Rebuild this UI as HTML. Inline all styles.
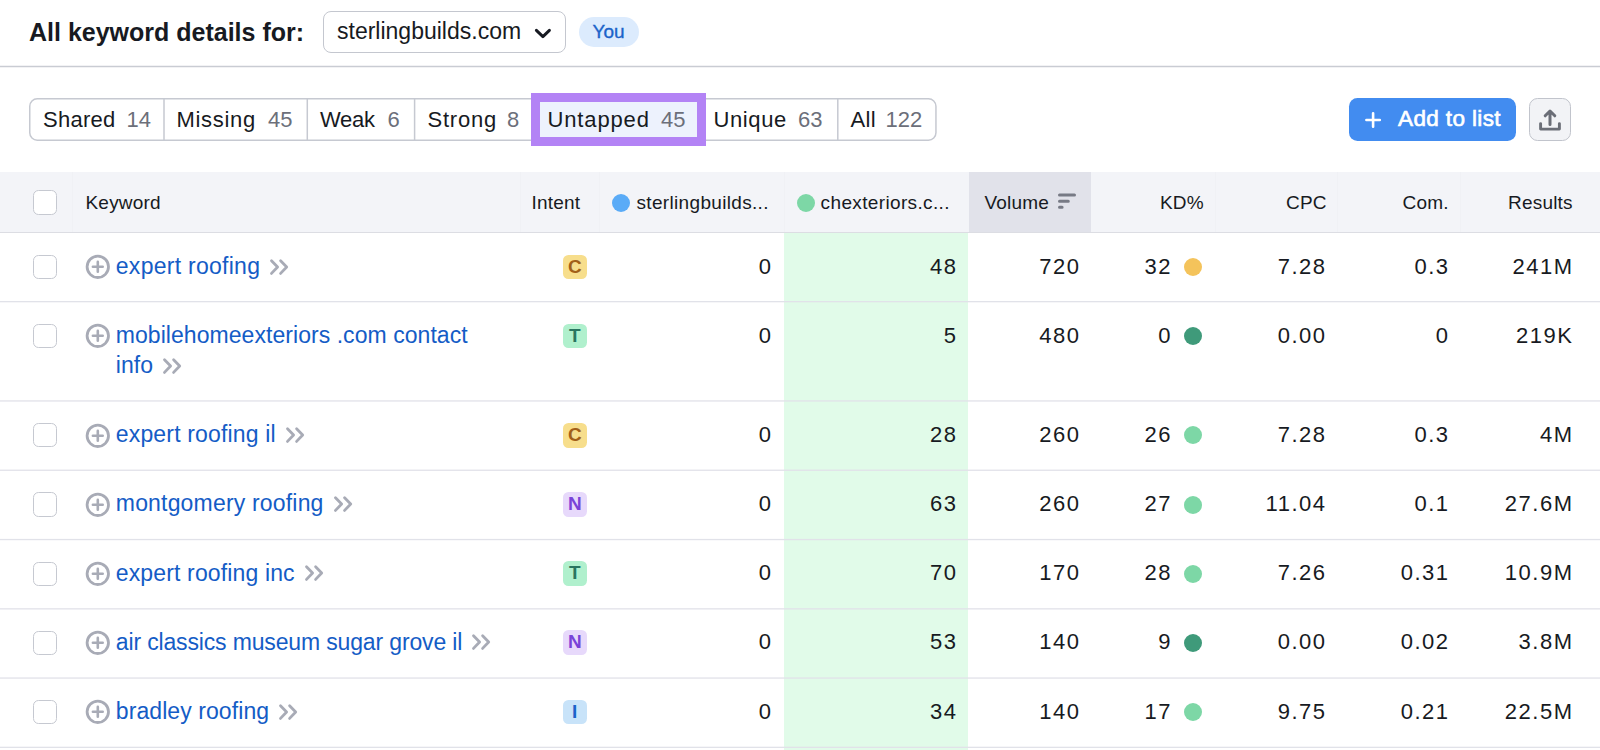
<!DOCTYPE html>
<html><head><meta charset="utf-8">
<style>
*{box-sizing:border-box;margin:0;padding:0}
html,body{width:1600px;height:750px;overflow:hidden;background:#fff}
body{position:relative;font-family:"Liberation Sans",sans-serif;color:#171a22}
.a{position:absolute;white-space:nowrap;line-height:1}
.title{left:29px;top:19.8px;font-size:25px;font-weight:700}
.dd{left:323.2px;top:10.6px;width:242.4px;height:42.6px;border:1.6px solid #c4c7cf;border-radius:8px}
.ddt{left:337px;top:20.3px;font-size:23px}
.you{left:578.8px;top:16.6px;width:60.6px;height:30.6px;border-radius:16px;background:#dcebfd}
.yout{left:592.5px;top:21.8px;font-size:19px;color:#1b63c9;-webkit-text-stroke:0.35px #1b63c9}
.sep{left:0;top:66px;width:1600px;height:1.2px;background:#d3d5dc}
.tabs{left:29px;top:98.5px;width:908px;height:42.2px;border:1.3px solid #c4c7cf;border-radius:8px}
.tsep{top:98.5px;width:1.3px;height:42.2px;background:#c4c7cf}
.tl{top:109px;font-size:22px}
.tc{color:#6c6f7a}
.untap{left:530.8px;top:92.7px;width:174.8px;height:53.5px;border:9px solid #b383f5;background:#edf2fd}
.btn{left:1348.5px;top:98px;width:167.5px;height:43px;border-radius:8.5px;background:#428cf0}
.btnt{left:1398px;top:108.2px;font-size:22.5px;font-weight:400;letter-spacing:0.38px;color:#fff;-webkit-text-stroke:0.65px #fff}
.exp{left:1528.6px;top:98.3px;width:42.4px;height:42.7px;border:1.5px solid #c1c4cc;border-radius:8.5px;background:#f2f3f6}
.thead{left:0;top:172px;width:1600px;height:60.5px;background:#f3f4f8;border-bottom:1.2px solid #dcdde3}
.volh{left:968.6px;top:172px;width:122.8px;height:60px;background:#e1e2ea}
.hsep{top:172px;width:1px;height:60px;background:#f0f1f5}
.cb{width:24.4px;height:24.4px;border:1.6px solid #c6c9d1;border-radius:5.5px;background:#fff}
.ht{top:192.5px;font-size:19px;letter-spacing:0.2px}
.green{left:784px;top:233px;width:184.4px;height:517px;background:#e1fbe9}
.rline{left:0;width:1600px;height:1.2px;background:#e2e3ea}
.kw{font-size:23px;color:#145cc6}
.num{font-size:22px;letter-spacing:1.5px}
.badge{width:24.5px;height:24.5px;border-radius:5.5px;font-size:19px;font-weight:700;text-align:center;line-height:24.5px}
.chev{vertical-align:-2.7px;margin-left:9.2px}
.dot{width:18px;height:18px;border-radius:50%}
</style></head><body>
<div class="a title">All keyword details for:</div>
<div class="a dd"></div>
<div class="a ddt">sterlingbuilds.com</div>
<svg class="a" style="left:533px;top:26px" width="20" height="14" viewBox="0 0 20 14"><path d="M3.4 4.4 L9.9 10.6 L16.4 4.4" fill="none" stroke="#171a22" stroke-width="3" stroke-linecap="round" stroke-linejoin="round"/></svg>
<div class="a you"></div>
<div class="a yout">You</div>
<svg class="a" style="left:0;top:0" width="1600" height="80"><rect x="0" y="65.75" width="1600" height="1.5" fill="#c9ccd3"/></svg>

<svg class="a" style="left:0;top:0" width="1000" height="160"><rect x="29.75" y="98.85" width="906.2" height="41.3" rx="7.5" fill="none" stroke="#c6c9d1" stroke-width="1.5"/><path d="M164 98.85V140.15M307.3 98.85V140.15M414.6 98.85V140.15M837.8 98.85V140.15" stroke="#c6c9d1" stroke-width="1.5"/></svg>
<div class="a untap"></div>
<div class="a tl" style="left:43px;letter-spacing:0.27px">Shared</div><div class="a tl tc" style="left:126.5px">14</div>
<div class="a tl" style="left:176.5px;letter-spacing:0.7px">Missing</div><div class="a tl tc" style="left:268px">45</div>
<div class="a tl" style="left:320px;letter-spacing:-0.3px">Weak</div><div class="a tl tc" style="left:387.5px">6</div>
<div class="a tl" style="left:427.5px;letter-spacing:0.78px">Strong</div><div class="a tl tc" style="left:507px">8</div>
<div class="a tl" style="left:547.5px;letter-spacing:0.86px">Untapped</div><div class="a tl tc" style="left:661px">45</div>
<div class="a tl" style="left:713.5px;letter-spacing:0.6px">Unique</div><div class="a tl tc" style="left:798px">63</div>
<div class="a tl" style="left:850.5px;letter-spacing:0.3px">All</div><div class="a tl tc" style="left:885.5px">122</div>

<div class="a btn"></div>
<svg class="a" style="left:1362px;top:108.5px" width="22" height="22" viewBox="0 0 22 22"><path d="M11.1 4.3V17.7M4.4 11H17.8" stroke="#fff" stroke-width="2.6" stroke-linecap="round"/></svg>
<div class="a btnt">Add to list</div>
<div class="a exp"></div>
<svg class="a" style="left:1536px;top:106px" width="28" height="28" viewBox="0 0 28 28"><path d="M14 5.5V18.6M9.2 9.8L14 5L18.8 9.8" fill="none" stroke="#6b6e77" stroke-width="3" stroke-linecap="round" stroke-linejoin="round"/><path d="M4.6 17.6V23.1H23.4V17.6" fill="none" stroke="#6b6e77" stroke-width="2.9" stroke-linecap="round" stroke-linejoin="round"/></svg>

<div class="a thead"></div>
<div class="a volh"></div>
<div class="a hsep" style="left:72px"></div>
<div class="a hsep" style="left:519.5px"></div>
<div class="a hsep" style="left:599px"></div>
<div class="a hsep" style="left:783.5px"></div>
<div class="a hsep" style="left:1337px"></div>
<div class="a hsep" style="left:1460px"></div>
<div class="a hsep" style="left:1215px"></div>
<div class="a cb" style="left:32.8px;top:190.3px"></div>
<div class="a ht" style="left:85.5px">Keyword</div>
<div class="a ht" style="left:531.5px">Intent</div>
<div class="a dot" style="left:612px;top:193.5px;background:#5aabf7"></div>
<div class="a ht" style="left:636.5px;letter-spacing:0.33px">sterlingbuilds...</div>
<div class="a dot" style="left:796.5px;top:193.5px;background:#7dd7a6"></div>
<div class="a ht" style="left:820.6px;letter-spacing:0.36px">chexteriors.c...</div>
<div class="a ht" style="left:984.5px">Volume</div>
<svg class="a" style="left:1056px;top:192px" width="22" height="18" viewBox="0 0 22 18"><path d="M3.5 3H18.5M3.5 9.2H12.3M3.5 15.2H6.1" stroke="#777a85" stroke-width="3" stroke-linecap="round"/></svg>
<div class="a ht" style="left:1160px">KD%</div>
<div class="a ht" style="left:1286px">CPC</div>
<div class="a ht" style="left:1402.5px">Com.</div>
<div class="a ht" style="left:1508px">Results</div>

<div class="a green"></div>
<div class="a cb" style="left:32.8px;top:254.80px"></div>
<svg class="a" style="left:84px;top:253.20px" width="28" height="28" viewBox="0 0 28 28"><circle cx="13.8" cy="13.8" r="10.7" fill="none" stroke="#a8abb6" stroke-width="2.8"/><path d="M13.8 8.9V18.7M8.9 13.8H18.7" stroke="#a8abb6" stroke-width="2.6" stroke-linecap="round"/></svg>
<div class="a kw" style="left:115.8px;letter-spacing:0.27px;top:254.82px"><span class="kwt">expert roofing</span><svg class="chev" width="24" height="20" viewBox="0 0 24 20"><path d="M2.5 3.8L8.6 10L2.5 16.4M11.6 3.8L17.7 10L11.6 16.4" fill="none" stroke="#a8abb6" stroke-width="2.8" stroke-linecap="round" stroke-linejoin="round"/></svg></div>
<div class="a badge" style="left:562.5px;top:254.75px;background:#f7de8c;color:#a15f18">C</div>
<div class="a num" style="right:827.5px;top:255.67px">0</div>
<div class="a num" style="right:642.5px;top:255.67px">48</div>
<div class="a num" style="right:519.5px;top:255.67px">720</div>
<div class="a num" style="right:428.0px;top:255.67px">32</div>
<div class="a num" style="right:273.5px;top:255.67px">7.28</div>
<div class="a num" style="right:150.5px;top:255.67px">0.3</div>
<div class="a num" style="right:26.5px;top:255.67px">241M</div>
<div class="a dot" style="left:1184.2px;top:258.00px;background:#f4c35b"></div>
<div class="a cb" style="left:32.8px;top:323.90px"></div>
<svg class="a" style="left:84px;top:322.30px" width="28" height="28" viewBox="0 0 28 28"><circle cx="13.8" cy="13.8" r="10.7" fill="none" stroke="#a8abb6" stroke-width="2.8"/><path d="M13.8 8.9V18.7M8.9 13.8H18.7" stroke="#a8abb6" stroke-width="2.6" stroke-linecap="round"/></svg>
<div class="a kw" style="left:115.8px;letter-spacing:0.05px;top:323.92px">mobilehomeexteriors .com contact</div>
<div class="a kw" style="left:115.8px;letter-spacing:0.05px;top:354.12px"><span class="kwt">info</span><svg class="chev" width="24" height="20" viewBox="0 0 24 20"><path d="M2.5 3.8L8.6 10L2.5 16.4M11.6 3.8L17.7 10L11.6 16.4" fill="none" stroke="#a8abb6" stroke-width="2.8" stroke-linecap="round" stroke-linejoin="round"/></svg></div>
<div class="a badge" style="left:562.5px;top:323.85px;background:#b0f0cd;color:#2a7560">T</div>
<div class="a num" style="right:827.5px;top:324.77px">0</div>
<div class="a num" style="right:642.5px;top:324.77px">5</div>
<div class="a num" style="right:519.5px;top:324.77px">480</div>
<div class="a num" style="right:428.0px;top:324.77px">0</div>
<div class="a num" style="right:273.5px;top:324.77px">0.00</div>
<div class="a num" style="right:150.5px;top:324.77px">0</div>
<div class="a num" style="right:26.5px;top:324.77px">219K</div>
<div class="a dot" style="left:1184.2px;top:327.10px;background:#3f9a7a"></div>
<div class="a cb" style="left:32.8px;top:423.10px"></div>
<svg class="a" style="left:84px;top:421.50px" width="28" height="28" viewBox="0 0 28 28"><circle cx="13.8" cy="13.8" r="10.7" fill="none" stroke="#a8abb6" stroke-width="2.8"/><path d="M13.8 8.9V18.7M8.9 13.8H18.7" stroke="#a8abb6" stroke-width="2.6" stroke-linecap="round"/></svg>
<div class="a kw" style="left:115.8px;letter-spacing:0.16px;top:423.12px"><span class="kwt">expert roofing il</span><svg class="chev" width="24" height="20" viewBox="0 0 24 20"><path d="M2.5 3.8L8.6 10L2.5 16.4M11.6 3.8L17.7 10L11.6 16.4" fill="none" stroke="#a8abb6" stroke-width="2.8" stroke-linecap="round" stroke-linejoin="round"/></svg></div>
<div class="a badge" style="left:562.5px;top:423.05px;background:#f7de8c;color:#a15f18">C</div>
<div class="a num" style="right:827.5px;top:423.97px">0</div>
<div class="a num" style="right:642.5px;top:423.97px">28</div>
<div class="a num" style="right:519.5px;top:423.97px">260</div>
<div class="a num" style="right:428.0px;top:423.97px">26</div>
<div class="a num" style="right:273.5px;top:423.97px">7.28</div>
<div class="a num" style="right:150.5px;top:423.97px">0.3</div>
<div class="a num" style="right:26.5px;top:423.97px">4M</div>
<div class="a dot" style="left:1184.2px;top:426.30px;background:#7dd7a6"></div>
<div class="a cb" style="left:32.8px;top:492.30px"></div>
<svg class="a" style="left:84px;top:490.70px" width="28" height="28" viewBox="0 0 28 28"><circle cx="13.8" cy="13.8" r="10.7" fill="none" stroke="#a8abb6" stroke-width="2.8"/><path d="M13.8 8.9V18.7M8.9 13.8H18.7" stroke="#a8abb6" stroke-width="2.6" stroke-linecap="round"/></svg>
<div class="a kw" style="left:115.8px;letter-spacing:0.18px;top:492.32px"><span class="kwt">montgomery roofing</span><svg class="chev" width="24" height="20" viewBox="0 0 24 20"><path d="M2.5 3.8L8.6 10L2.5 16.4M11.6 3.8L17.7 10L11.6 16.4" fill="none" stroke="#a8abb6" stroke-width="2.8" stroke-linecap="round" stroke-linejoin="round"/></svg></div>
<div class="a badge" style="left:562.5px;top:492.25px;background:#e7d9fb;color:#7a44d8">N</div>
<div class="a num" style="right:827.5px;top:493.17px">0</div>
<div class="a num" style="right:642.5px;top:493.17px">63</div>
<div class="a num" style="right:519.5px;top:493.17px">260</div>
<div class="a num" style="right:428.0px;top:493.17px">27</div>
<div class="a num" style="right:273.5px;top:493.17px">11.04</div>
<div class="a num" style="right:150.5px;top:493.17px">0.1</div>
<div class="a num" style="right:26.5px;top:493.17px">27.6M</div>
<div class="a dot" style="left:1184.2px;top:495.50px;background:#7dd7a6"></div>
<div class="a cb" style="left:32.8px;top:561.50px"></div>
<svg class="a" style="left:84px;top:559.90px" width="28" height="28" viewBox="0 0 28 28"><circle cx="13.8" cy="13.8" r="10.7" fill="none" stroke="#a8abb6" stroke-width="2.8"/><path d="M13.8 8.9V18.7M8.9 13.8H18.7" stroke="#a8abb6" stroke-width="2.6" stroke-linecap="round"/></svg>
<div class="a kw" style="left:115.8px;letter-spacing:0.14px;top:561.52px"><span class="kwt">expert roofing inc</span><svg class="chev" width="24" height="20" viewBox="0 0 24 20"><path d="M2.5 3.8L8.6 10L2.5 16.4M11.6 3.8L17.7 10L11.6 16.4" fill="none" stroke="#a8abb6" stroke-width="2.8" stroke-linecap="round" stroke-linejoin="round"/></svg></div>
<div class="a badge" style="left:562.5px;top:561.45px;background:#b0f0cd;color:#2a7560">T</div>
<div class="a num" style="right:827.5px;top:562.37px">0</div>
<div class="a num" style="right:642.5px;top:562.37px">70</div>
<div class="a num" style="right:519.5px;top:562.37px">170</div>
<div class="a num" style="right:428.0px;top:562.37px">28</div>
<div class="a num" style="right:273.5px;top:562.37px">7.26</div>
<div class="a num" style="right:150.5px;top:562.37px">0.31</div>
<div class="a num" style="right:26.5px;top:562.37px">10.9M</div>
<div class="a dot" style="left:1184.2px;top:564.70px;background:#7dd7a6"></div>
<div class="a cb" style="left:32.8px;top:630.50px"></div>
<svg class="a" style="left:84px;top:628.90px" width="28" height="28" viewBox="0 0 28 28"><circle cx="13.8" cy="13.8" r="10.7" fill="none" stroke="#a8abb6" stroke-width="2.8"/><path d="M13.8 8.9V18.7M8.9 13.8H18.7" stroke="#a8abb6" stroke-width="2.6" stroke-linecap="round"/></svg>
<div class="a kw" style="left:115.8px;letter-spacing:-0.15px;top:630.52px"><span class="kwt">air classics museum sugar grove il</span><svg class="chev" width="24" height="20" viewBox="0 0 24 20"><path d="M2.5 3.8L8.6 10L2.5 16.4M11.6 3.8L17.7 10L11.6 16.4" fill="none" stroke="#a8abb6" stroke-width="2.8" stroke-linecap="round" stroke-linejoin="round"/></svg></div>
<div class="a badge" style="left:562.5px;top:630.45px;background:#e7d9fb;color:#7a44d8">N</div>
<div class="a num" style="right:827.5px;top:631.37px">0</div>
<div class="a num" style="right:642.5px;top:631.37px">53</div>
<div class="a num" style="right:519.5px;top:631.37px">140</div>
<div class="a num" style="right:428.0px;top:631.37px">9</div>
<div class="a num" style="right:273.5px;top:631.37px">0.00</div>
<div class="a num" style="right:150.5px;top:631.37px">0.02</div>
<div class="a num" style="right:26.5px;top:631.37px">3.8M</div>
<div class="a dot" style="left:1184.2px;top:633.70px;background:#3f9a7a"></div>
<div class="a cb" style="left:32.8px;top:699.90px"></div>
<svg class="a" style="left:84px;top:698.30px" width="28" height="28" viewBox="0 0 28 28"><circle cx="13.8" cy="13.8" r="10.7" fill="none" stroke="#a8abb6" stroke-width="2.8"/><path d="M13.8 8.9V18.7M8.9 13.8H18.7" stroke="#a8abb6" stroke-width="2.6" stroke-linecap="round"/></svg>
<div class="a kw" style="left:115.8px;letter-spacing:0.08px;top:699.92px"><span class="kwt">bradley roofing</span><svg class="chev" width="24" height="20" viewBox="0 0 24 20"><path d="M2.5 3.8L8.6 10L2.5 16.4M11.6 3.8L17.7 10L11.6 16.4" fill="none" stroke="#a8abb6" stroke-width="2.8" stroke-linecap="round" stroke-linejoin="round"/></svg></div>
<div class="a badge" style="left:562.5px;top:699.85px;background:#c8e3f9;color:#1b63c9">I</div>
<div class="a num" style="right:827.5px;top:700.77px">0</div>
<div class="a num" style="right:642.5px;top:700.77px">34</div>
<div class="a num" style="right:519.5px;top:700.77px">140</div>
<div class="a num" style="right:428.0px;top:700.77px">17</div>
<div class="a num" style="right:273.5px;top:700.77px">9.75</div>
<div class="a num" style="right:150.5px;top:700.77px">0.21</div>
<div class="a num" style="right:26.5px;top:700.77px">22.5M</div>
<div class="a dot" style="left:1184.2px;top:703.10px;background:#7dd7a6"></div>
<svg class="a" style="left:0;top:0" width="1600" height="750"><rect x="0" y="301.0" width="1600" height="1.3" fill="#e1e2e9"/><rect x="0" y="400.3" width="1600" height="1.3" fill="#e1e2e9"/><rect x="0" y="469.6" width="1600" height="1.3" fill="#e1e2e9"/><rect x="0" y="538.9" width="1600" height="1.3" fill="#e1e2e9"/><rect x="0" y="608.2" width="1600" height="1.3" fill="#e1e2e9"/><rect x="0" y="677.4" width="1600" height="1.3" fill="#e1e2e9"/><rect x="0" y="746.7" width="1600" height="1.3" fill="#e1e2e9"/></svg>
</body></html>
